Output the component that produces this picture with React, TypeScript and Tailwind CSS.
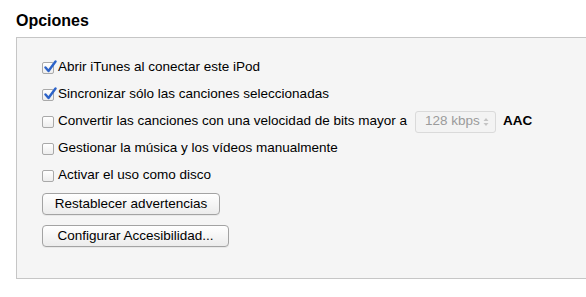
const options = [
  { label: "Abrir iTunes al conectar este iPod", checked: true },
  { label: "Sincronizar sólo las canciones seleccionadas", checked: true },
  { label: "Convertir las canciones con una velocidad de bits mayor a", checked: false, bitrate: true },
  { label: "Gestionar la música y los vídeos manualmente", checked: false },
  { label: "Activar el uso como disco", checked: false },
];

function Checkbox({ checked }: { checked: boolean }) {
  return (
    <span className="relative flex h-[12px] w-[12px] shrink-0 items-center justify-center rounded-[2px] border border-[#a9a9a9] bg-gradient-to-b from-white to-[#ededed]">
      {checked && (
        <svg viewBox="0 0 14 14" className="absolute left-[0px] top-[-3px] h-[14px] w-[14px]">
          <path d="M2.5 7.5 L5.5 11 L12.5 1.5" fill="none" stroke="#2d63c8" strokeWidth="2.4" strokeLinecap="round" strokeLinejoin="round" />
        </svg>
      )}
    </span>
  );
}

function MacButton({ children, width }: { children: React.ReactNode; width: string }) {
  return (
    <button className={`flex h-[22px] items-center justify-center rounded-[4px] border border-[#a3a3a3] bg-gradient-to-b from-white to-[#ececec] text-[13.5px] leading-none text-black shadow-[0_1px_0_rgba(0,0,0,0.05)] ${width}`}>
      {children}
    </button>
  );
}

export default function App() {
  return (
    <div className="h-[297px] w-[586px] overflow-hidden bg-white font-['Liberation_Sans',Arial,sans-serif] text-black">
      <h2 className="pl-[16px] pt-[11px] text-[16px] font-bold leading-[20px]">Opciones</h2>
      <div className="ml-[16px] mt-[6px] h-[242px] w-[600px] border border-r-0 border-[#c6c6c6] bg-[#f5f5f5] pl-[25px] pt-[16px]">
        {options.map((opt) => (
          <div key={opt.label} className="flex h-[27px] items-center gap-[4px] text-[13.5px]">
            <Checkbox checked={opt.checked} />
            <span>{opt.label}</span>
            {opt.bitrate && (
              <>
                <span className="ml-[4px] flex h-[22px] w-[81px] items-center justify-between rounded-[3px] border border-[#dadada] bg-[#f3f3f3] pl-[9px] pr-[6px] text-[#9b9b9b]">
                  128 kbps
                  <svg viewBox="0 0 6 10" className="h-[10px] w-[6px]">
                    <path d="M0.5 4 L3 1 L5.5 4 Z M0.5 6 L3 9 L5.5 6 Z" fill="#c4c4c4" />
                  </svg>
                </span>
                <span className="ml-[3px] font-bold">AAC</span>
              </>
            )}
          </div>
        ))}
        <div className="mt-[4px] flex flex-col items-start gap-[10px]">
          <MacButton width="w-[178px]">Restablecer advertencias</MacButton>
          <MacButton width="w-[187px]">Configurar Accesibilidad...</MacButton>
        </div>
      </div>
    </div>
  );
}
